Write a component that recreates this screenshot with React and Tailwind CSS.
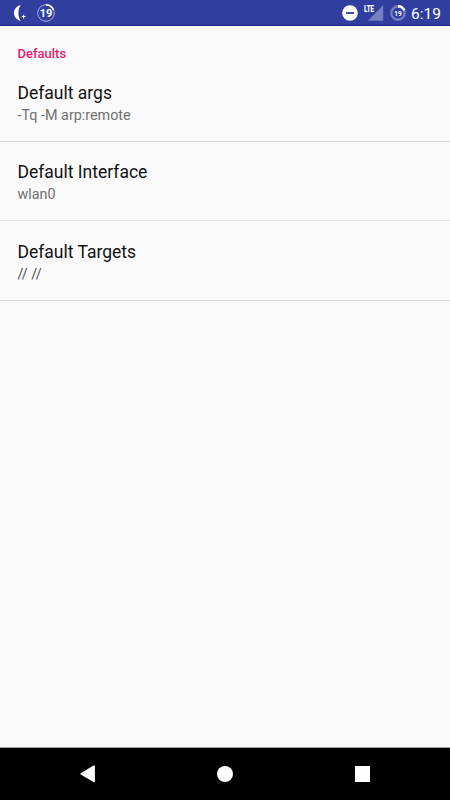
import React from 'react'

const preferences = [
    { title: 'Default args', summary: '-Tq -M arp:remote', height: 'h-[71px]', line: 'border-[#d6d6d6]', color: 'text-[#707070]' },
    { title: 'Default Interface', summary: 'wlan0', height: 'h-[79px]', line: 'border-[#dedede]', color: 'text-[#707070]' },
    { title: 'Default Targets', summary: '// //', height: 'h-[80px]', line: 'border-[#d6d6d6]', color: 'text-[#505050]' },
]

function MoonIcon() {
    return (
        <svg className="w-[14px] h-[18px]" viewBox="0 0 14 18" fill="#fff">
            <path d="M7.8 1C3.8 2 1 5.1 1 9s2.8 7 6.8 8C6.2 14.6 5.4 12 5.4 9s.8-5.6 2.4-8Z" />
            <path d="M10.1 10.7h1v1.3h1.4v1h-1.4v1.4h-1v-1.4H8.8v-1h1.3Z" />
        </svg>
    )
}

function BatteryCircle() {
    return (
        <svg className="w-[18px] h-[18px]" viewBox="0 0 18 18" fill="none">
            <circle cx="9" cy="9" r="8.3" stroke="#aab1dc" strokeWidth="1" />
            <path d="M9 .9A8.1 8.1 0 0 1 16.5 6" stroke="#fff" strokeWidth="1.7" />
            <text x="9" y="13" textAnchor="middle" fill="#fff" fontSize="11" fontWeight="700" fontFamily="Roboto, sans-serif">19</text>
        </svg>
    )
}

function BatteryRing() {
    return (
        <svg className="w-4 h-4" viewBox="0 0 16 16" fill="none">
            <circle cx="8" cy="8" r="6.7" stroke="#7580c1" strokeWidth="2.4" />
            <path d="M8 1.3A6.7 6.7 0 0 1 14.2 5.4" stroke="#fff" strokeWidth="2.4" />
            <text x="8" y="10.9" textAnchor="middle" fill="#fff" fontSize="8" fontWeight="700" textLength="7.5" lengthAdjust="spacingAndGlyphs" fontFamily="Roboto, sans-serif">19</text>
        </svg>
    )
}

function DoNotDisturb() {
    return (
        <svg className="w-4 h-4" viewBox="0 0 16 16">
            <circle cx="8" cy="8" r="7.8" fill="#fff" />
            <rect x="4" y="7.1" width="8" height="1.8" fill="#303f9f" />
        </svg>
    )
}

function Signal() {
    return (
        <svg className="w-[20px] h-[18px]" viewBox="0 0 20 18">
            <path d="M19.2 1.2v15.5H3.9Z" fill="#7580c1" />
            <text x="0" y="8" fill="#fff" stroke="#fff" strokeWidth=".15" fontSize="9.5" fontWeight="700" textLength="10" lengthAdjust="spacingAndGlyphs" fontFamily="Roboto, sans-serif">LTE</text>
        </svg>
    )
}

function StatusBar() {
    return (
        <header className="flex items-center justify-between h-[26px] pl-[13px] pr-[9px] bg-[#303f9f] border-b border-[#17268a] text-white">
            <div className="flex items-center gap-[10px]">
                <MoonIcon />
                <BatteryCircle />
            </div>
            <div className="flex items-center">
                <DoNotDisturb />
                <div className="ml-[6px]"><Signal /></div>
                <div className="ml-[6px]"><BatteryRing /></div>
                <span className="ml-[5px] pt-[2px] text-[15.5px] leading-5">6:19</span>
            </div>
        </header>
    )
}

function Preference({ title, summary, height, line, color }) {
    return (
        <li className={`${height} ${line} flex flex-col justify-end pl-[17.5px] pb-[15.5px] border-b`}>
            <span className="text-[17.5px] leading-[21px] text-[#121212]">{title}</span>
            <span className={`${color} mt-[0.5px] text-[14.35px] leading-[21px]`}>{summary}</span>
        </li>
    )
}

function NavBar() {
    return (
        <nav className="flex items-center h-[53px] bg-black border-t border-[#a0a0a0]">
            <svg className="w-[16px] h-[18px] ml-[80px]" viewBox="0 0 16 18" fill="#fff">
                <path d="M.7 8.3 13.5.6q1.4-.6 1.4.8v14.8q0 1.4-1.4.8L.7 9.4q-.9-.5 0-1.1Z" />
            </svg>
            <div className="w-[16.5px] h-[16.5px] ml-[120.7px] rounded-full bg-white" />
            <div className="w-[15.5px] h-[15.5px] ml-[121.8px] bg-white" />
        </nav>
    )
}

export default function App() {
    return (
        <div className="flex flex-col w-full h-[800px] bg-[#fafafa] font-[Roboto,sans-serif]">
            <StatusBar />
            <main className="flex-1">
                <h2 className="h-[45px] pt-[18px] pl-[17.5px] text-[13px] leading-5 font-medium text-[#ee1a70]">Defaults</h2>
                <ul>
                    {preferences.map((pref) => (
                        <Preference key={pref.title} {...pref} />
                    ))}
                </ul>
            </main>
            <NavBar />
        </div>
    )
}
